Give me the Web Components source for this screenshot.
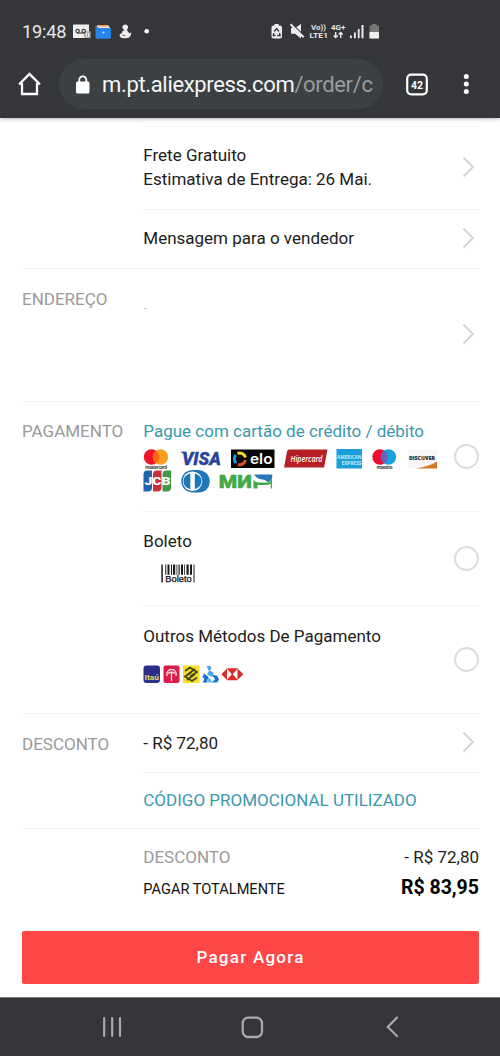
<!DOCTYPE html>
<html lang="pt-BR">
<head>
<meta charset="utf-8">
<title>Pagamento</title>
<style>
html,body{margin:0;padding:0;background:#fff}
body{font-family:Roboto,"Liberation Sans",sans-serif;font-size:17px;line-height:24px;color:#1c1c1c}
</style>
</head>
<body>
<checkout-screen></checkout-screen>
<script>
const define = (name, css, html) => customElements.define(name, class extends HTMLElement {
  constructor() {
    super();
    const t = document.createElement('template');
    t.innerHTML = `<style>:host{display:block;box-sizing:border-box}svg{display:block;flex:none}${css}</style>${html}`;
    this.attachShadow({ mode: 'open' }).append(t.content.cloneNode(true));
  }
});

define('status-bar', `
:host{height:57px;padding:6px 0 0 22px;display:flex;align-items:center;color:#e6e7e8;font-size:18.2px;letter-spacing:-.2px}
.t{width:51px;white-space:nowrap}
`, `
<span class="t">19:48</span>
<svg width="82" height="20" viewBox="73 22 82 20">
  <path d="M73 24.500h16v7h1.500v6.500H73z" fill="#eee"/>
  <g fill="none" stroke="#444" stroke-width="1.200"><circle cx="77.700" cy="31" r="1.700"/><circle cx="83.700" cy="31" r="1.700"/><path d="M77 33h8"/></g>
  <rect x="85" y="32" width="5" height="6" rx="1" fill="#eee" stroke="#555" stroke-width=".8"/><path d="M87.500 33.500v3" stroke="#c68a30"/>
  <path d="M97 25h11l2 3v6H97z" fill="#f5e5d2"/><path d="M97 25h10l1 1.500H98z" fill="#ee9b50"/>
  <path d="M95.500 25.500l3 2.500h12.500v9.500q0 1.200-1.200 1.200H97q-1.500 0-1.500-1.300z" fill="#2684ea"/><circle cx="103.500" cy="32.500" r="1.100" fill="#bdf"/>
  <path d="M122.300 28q-.3-3 2.800-3.500 3.300.2 3 3.500-1.500 1-1 2.500l2.200 2.700 2.200-.7-1 3.500q-1.500 2.500-5.500 2.200-5 .3-5.500-2.600 0-1.800 2-2 .5-2.700 2.800-3.600z" fill="#eee"/>
  <path d="M122.500 35l3 1" stroke="#35363a" stroke-width=".8"/>
  <circle cx="146.700" cy="31.300" r="2.300" fill="#fff"/>
</svg>
<svg style="margin-left:116px" width="110" height="20" viewBox="271 22 110 20" fill="#eee">
  <path d="M274.500 24h4v1.500h1.500q2 0 2 2v9q0 2-2 2h-6.500q-2 0-2-2v-9q0-2 2-2h1z"/>
  <path d="M274.200 31.500l2.400-3 2.300 3m.6 1.300l.7 2.700h-3m-1.600 0h-2.300l.4-2.500" fill="none" stroke="#35363a" stroke-width="1.300"/>
  <path d="M291 28h4l6-4v14.500l-6-4.700h-4z"/><path d="M291.800 24L305.500 37" stroke="#35363a" stroke-width="1.500"/><path d="M290.500 24.300L303.700 37.300" stroke="#eee" stroke-width="2"/>
  <g letter-spacing="0"><text x="311" y="30" font-size="7.500" font-weight="600" textLength="15" lengthAdjust="spacingAndGlyphs">Vo))</text>
  <text x="309.500" y="38.300" font-size="8" font-weight="600" textLength="18.500" lengthAdjust="spacingAndGlyphs">LTE1</text>
  <text x="331" y="30" font-size="7.800" font-weight="600" textLength="14.500" lengthAdjust="spacingAndGlyphs">4G+</text></g>
  <path d="M335.700 32v5.500m-2-2l2 2 2-2M340.700 38v-5.500m-2 2l2-2 2 2" fill="none" stroke="#eee" stroke-width="1.400"/>
  <path d="M350 35.500h1.800v2.700H350zM354 32.500h1.800v5.700H354zM357.800 29h1.800v9.200h-1.800zM361.500 25h2v13.200h-2z"/>
  <path d="M372 24h4.500v1.500h2.500v13h-9.500v-13h2.500z" fill="#777"/><path d="M369.500 32h9.500v5.500q0 1-1 1h-7.500q-1 0-1-1z"/>
</svg>`);

define('browser-bar', `
:host{height:61px;padding:2px 0 9px 18px;display:flex;align-items:center}
.url{box-sizing:border-box;width:324px;height:50px;margin-left:18px;border-radius:25px;background:#3c4043;display:flex;align-items:center;padding-left:17px;color:#f4f5f5;font-size:22px;white-space:nowrap}
.url span{margin-left:12px;padding-top:2px;letter-spacing:-.34px} i{font-style:normal;color:#999b9d}
`, `
<svg width="23" height="24" viewBox="18 72 23 24" fill="none" stroke="#fff" stroke-width="2.300"><path d="M22 83v11h15V83M19 84.500L29.500 74 40 84.500"/></svg>
<div class="url"><svg width="14" height="19" viewBox="0 0 14 19"><rect y="6.500" width="13.500" height="12" rx="1.500" fill="#fff"/><path d="M3.300 8V4.800a3.500 3.500 0 0 1 7 0V8" fill="none" stroke="#fff" stroke-width="1.800"/></svg><span>m.pt.aliexpress.com<i>/order/c</i></span></div>
<svg style="margin-left:23px" width="22" height="23" viewBox="0 0 22 23"><rect x="1.200" y="1.700" width="19.600" height="19.600" rx="4" fill="none" stroke="#fff" stroke-width="2.200"/><text x="5" y="15.500" fill="#fff" font-size="11.500" font-weight="700" textLength="12" lengthAdjust="spacingAndGlyphs">42</text></svg>
<svg style="margin-left:34.500px" width="7" height="22" viewBox="0 0 7 22" fill="#fff"><circle cx="3.300" cy="3.500" r="2.500"/><circle cx="3.300" cy="11" r="2.500"/><circle cx="3.300" cy="18.500" r="2.500"/></svg>`);

define('checkout-section', `
:host{display:grid;grid-template-columns:121.300px 1fr;border-bottom:1px solid #f2f2f2}
.l{padding-top:var(--lt,18px);color:#9a9a9a;font-size:17px}
`, `<div class="l"><slot name="label"></slot></div><div><slot></slot></div>`);

define('checkout-row', `
:host{display:flex;align-items:center;height:var(--h);border-bottom:1px solid #f3f3f3}
:host([last]){border-bottom:0}
.c{flex:1;align-self:flex-start;padding-top:var(--pt,17px);white-space:nowrap}
`, `<div class="c"><slot></slot></div><slot name="end"></slot>`);

define('row-chevron', `:host{margin-right:4px;position:relative;top:-.7px}`,
`<svg width="13" height="22" viewBox="0 0 13 22"><path d="M1.500 1.500L11 11 1.500 20.500" fill="none" stroke="#d2d2d2" stroke-width="1.800"/></svg>`);

define('radio-mark', `:host{width:25px;height:25px;border:2.500px solid #dcdcdc;border-radius:50%}`, ``);

define('card-brands', `
:host{width:300px;height:45px;margin-top:5px;font-family:"Open Sans",sans-serif}
div{display:flex;height:22px}
`, `
<div>
<svg width="36" height="22" viewBox="143 448 36 22"><circle cx="151.500" cy="457" r="7.700" fill="#ee1425"/><circle cx="160.500" cy="457" r="7.700" fill="#fa9d20"/><path d="M156 450.700a7.700 7.700 0 0 1 0 12.600 7.700 7.700 0 0 1 0-12.600" fill="#ff6410"/><text x="145" y="468.500" font-size="4.500" font-weight="700" fill="#443" textLength="22">mastercard</text></svg>
<svg width="51" height="22" viewBox="179 448 51 22"><text x="182" y="465" font-family="Roboto" font-size="18.500" font-weight="900" font-style="italic" fill="#27459a" stroke="#27459a" stroke-width=".3" textLength="39" lengthAdjust="spacingAndGlyphs">VISA</text><path d="M180 451.800h5l2 5q-2-3-7-5" fill="#27459a"/></svg>
<svg width="53" height="22" viewBox="230 448 53 22"><path fill="#050505" d="M231 449.500h43.500V468H231z"/><g fill="none" stroke-width="3"><path d="M236 463a6 6 0 0 1-.2-8" stroke="#1ba5e0"/><path d="M237.500 453.500a6 6 0 0 1 8 4" stroke="#f4d62a"/><path d="M245.500 460a6 6 0 0 1-7.500 4.500" stroke="#e44b2b"/></g><text x="250" y="463.500" font-family="Inter" font-size="14" font-weight="600" fill="#fff" textLength="22.500" lengthAdjust="spacingAndGlyphs">elo</text></svg>
<svg width="52" height="22" viewBox="283 448 52 22"><path d="M289 449.500h38.500l-3.500 18h-40l3-16q.5-2 2-2" fill="#b62025"/><text x="290.500" y="461.500" font-size="8" font-style="italic" font-weight="600" fill="#fff" textLength="32" lengthAdjust="spacingAndGlyphs">Hipercard</text></svg>
<svg width="36" height="22" viewBox="335 448 36 22"><path d="M336.500 449h25.500v19.500h-25.500z" fill="#1a9fdb"/><g font-size="5" font-weight="700" fill="#c9ecfa"><text x="337" y="459" textLength="24.500" lengthAdjust="spacingAndGlyphs">AMERICAN</text><text x="341.500" y="464.500" textLength="20" lengthAdjust="spacingAndGlyphs">EXPRESS</text></g></svg>
<svg width="36" height="22" viewBox="371 448 36 22"><circle cx="380" cy="457" r="7.700" fill="#ed0c2b"/><circle cx="388.500" cy="457" r="7.700" fill="#18a0df"/><path d="M384.200 450.500a7.700 7.700 0 0 1 0 13 7.700 7.700 0 0 1 0-13" fill="#6d5fc0"/><text x="376.500" y="468.500" font-size="4.500" font-weight="700" fill="#443" textLength="16">maestro</text></svg>
<svg width="32" height="22" viewBox="407 448 32 22"><path d="M408 449.500h29v19h-29z" fill="#f7f7f7"/><path d="M416 468.500q13-2 21-7v7z" fill="#d27a2b"/><text x="409" y="460" font-size="5.800" font-weight="800" fill="#222" textLength="26" lengthAdjust="spacingAndGlyphs">DISCOVER</text><circle cx="423" cy="457.800" r="2" fill="#df8431"/></svg>
</div>
<div style="height:24px">
<svg width="37" height="24" viewBox="143 470 37 24"><path d="M147 470.500h5v17q0 4-4 4h-4.500v-17q0-4 3.500-4" fill="#2263ab"/><path d="M156.500 470.500h5v17q0 4-4 4H153v-17q0-4 3.500-4" fill="#c8303f"/><path d="M166 470.500h5v17q0 4-4 4h-4.500v-17q0-4 3.500-4" fill="#3d9a42"/><text x="144.500" y="484.500" font-family="Roboto" font-size="10" font-weight="900" fill="#fff" textLength="26" lengthAdjust="spacingAndGlyphs">JCB</text></svg>
<svg width="38" height="24" viewBox="180 470 38 24"><path d="M192.500 470h6c15 1 15 22 0 22.500h-6c-15-1-15-21.500 0-22.500" fill="#1d78b9"/><circle cx="192.500" cy="481.200" r="9.800" fill="#fff"/><path d="M190.300 473.500v15.500c-9-2-9-13.500 0-15.500m4.500 0v15.500c9-2 9-13.500 0-15.500" fill="#1d78b9"/></svg>
<svg width="55" height="24" viewBox="218 470 55 24"><text x="218.800" y="488" font-family="Roboto" font-size="19" font-weight="900" fill="#42a944" stroke="#42a944" stroke-width=".5" textLength="33" lengthAdjust="spacingAndGlyphs">МИ</text><path d="M253.500 479.500q1.500 2.500 4.500 3h9q3 0 5-3.500v9.500h-1.300v-5q-1.700 1.500-4.700 1.500h-8.500v3.500h-4z" fill="#42a944"/><path d="M254 474.500h18.200v3.500q-1.500 4-5 4-1-2.500-5-2.500-5-.5-8.200-5" fill="#2478b8"/></svg>
</div>`);

define('boleto-logo', `:host{margin:10.500px 0 0 17.700px;font-family:"Liberation Sans",sans-serif}`, `
<svg width="35" height="21" viewBox="0 0 35 21"><path d="M.3.500h1.500v18H.3zM4.300.500h1v10.300h-1zM6.500.500h2v10.300h-2zM10 .500h1v10.300h-1zM12 .500h2.200v10.300H12zM15.500.500h.8v10.300h-.8zM17.500.500h1.200v10.300h-1.200zM20 .500h2v10.300h-2zM23.200.500h.8v10.300h-.8zM25.500.500h2.200v10.300h-2.200zM29 .500h2v10.300h-2zM32.500.500h1v18h-1z" fill="#1a1a1a"/><text x="4.300" y="18.200" font-size="8.500" fill="#111" stroke="#111" stroke-width=".25" textLength="26.500" lengthAdjust="spacingAndGlyphs">Boleto</text></svg>`);

define('bank-logos', `:host{margin-top:17px}`, `
<svg width="101" height="19" viewBox="143 665 101 19">
<rect x="143.500" y="665.500" width="16.500" height="17.500" rx="3" fill="#2c2f88"/><text x="144.500" y="679.500" font-size="8" font-weight="800" fill="#dfd45c" textLength="14.500" lengthAdjust="spacingAndGlyphs">Itaú</text>
<rect x="163.500" y="665.500" width="16" height="17.500" rx="2" fill="#d91c48"/><path d="M167.300 676a4.700 4.700 0 1 1 8.500 0M168 673.500q3.500-2.500 7 0M171.500 673v8" fill="none" stroke="#fbdde4" stroke-width="1.300"/>
<path d="M183 665.500h16.500V683H183z" fill="#f5df24"/><path d="M185 671l5-3.500 7 4.500-7 4.500M197 677.500l-5 3.500-7-4.500 7-4.500M187 675l8-6M187 680l8-6" fill="none" stroke="#45441f" stroke-width="1.700"/>
<path d="M206.500 666.500l3.500-1 1.500 3-2 2 4.500 2.500-2 4-5-2.500 2-3.500z" fill="#47a8e9"/><path d="M204 673.500l4.500 3.500-2 5.500h-4l2-3.500-2-2zM212 675l5 .5 2 4-2 3h-5l3-3.500z" fill="#1474cc"/><path d="M208.500 677l4.500 5.500h-6z" fill="#5bb9ee"/>
<path d="M221.300 674.300l6-6h10l6 6-6 6h-10z" fill="#d92b2b"/><path d="M227 668.800v11l4.800-5.500zM237.500 668.800v11l-4.800-5.500z" fill="#fff"/>
</svg>`);

define('order-totals', `
:host{padding:16px 0 0 121.300px;height:102px}
div{display:flex;justify-content:space-between;align-items:baseline}
.d{height:24px}.d span{color:#9a9a9a}
.p{height:30px;margin-top:6.800px;color:#111}.p span{font-size:14.600px}.p b{font-size:19.500px;color:#000}
`, `<div class="d"><span>DESCONTO</span><em style="font-style:normal">- R$ 72,80</em></div><div class="p"><span>PAGAR TOTALMENTE</span><b>R$ 83,95</b></div>`);

define('pay-button', `
button{display:block;width:100%;height:53px;border:0;border-radius:2px;background:#ff4747;color:#fff;font:500 17px/24px Roboto,sans-serif;letter-spacing:1.250px;padding:0 0 1px}
`, `<button><slot></slot></button>`);

define('nav-bar', `
:host{height:59px;background:#35363a;border-top:1px solid #77787a;display:flex;align-items:center}
`, `
<svg style="margin-left:102px" width="20" height="22" viewBox="0 0 20 22" stroke="#a9a9aa" stroke-width="2.200" stroke-linecap="round"><path d="M2.200 2v18M10.200 2v18M18 2v18"/></svg>
<svg style="margin-left:119px" width="23" height="23" viewBox="0 0 23 23"><rect x="1.700" y="1.700" width="19.300" height="19.300" rx="5.500" fill="none" stroke="#a9a9aa" stroke-width="2.300"/></svg>
<svg style="margin-left:122px" width="13" height="22" viewBox="0 0 13 22"><path d="M11 1.500L1.800 11l9.200 9" fill="none" stroke="#a9a9aa" stroke-width="2.200" stroke-linecap="round"/></svg>`);

define('checkout-screen', `
:host{width:500px;height:1056px;overflow:hidden;background:#fff;display:flex;flex-direction:column}
header{background:#35363a;height:118px;flex:none;box-shadow:0 1px 4px rgba(60,40,40,.35)}
main{flex:1;padding:8px 21px 0 22px}
.first{border-top:1px solid #f5f5f5}
.link{color:#3b98ab}
.dash{display:block;width:3px;height:1px;margin:21px 0 0 1px;background:#c4c4c4}
`, `
<header><status-bar></status-bar><browser-bar></browser-bar></header>
<main>
<checkout-section>
  <checkout-row class="first" style="--h:84px;--pt:16px">Frete Gratuito<br>Estimativa de Entrega: 26 Mai.<row-chevron slot="end"></row-chevron></checkout-row>
  <checkout-row last style="--h:58px;--pt:16px">Mensagem para o vendedor<row-chevron slot="end"></row-chevron></checkout-row>
</checkout-section>
<checkout-section><span slot="label">ENDEREÇO</span>
  <checkout-row last style="--h:132px;--pt:18px"><span class="dash"></span><row-chevron slot="end"></row-chevron></checkout-row>
</checkout-section>
<checkout-section style="--lt:17px"><span slot="label">PAGAMENTO</span>
  <checkout-row style="--h:110px;--pt:17px"><span class="link">Pague com cartão de crédito / débito</span><card-brands></card-brands><radio-mark slot="end"></radio-mark></checkout-row>
  <checkout-row style="--h:94px;--pt:17px">Boleto<boleto-logo></boleto-logo><radio-mark slot="end"></radio-mark></checkout-row>
  <checkout-row last style="--h:107px;--pt:18px">Outros Métodos De Pagamento<bank-logos></bank-logos><radio-mark slot="end"></radio-mark></checkout-row>
</checkout-section>
<checkout-section><span slot="label">DESCONTO</span>
  <checkout-row style="--h:59px;--pt:17px">- R$ 72,80<row-chevron slot="end"></row-chevron></checkout-row>
  <checkout-row last style="--h:55px;--pt:15px"><span class="link">CÓDIGO PROMOCIONAL UTILIZADO</span></checkout-row>
</checkout-section>
<order-totals></order-totals>
<pay-button>Pagar Agora</pay-button>
</main>
<nav-bar></nav-bar>`);
</script>
</body>
</html>
